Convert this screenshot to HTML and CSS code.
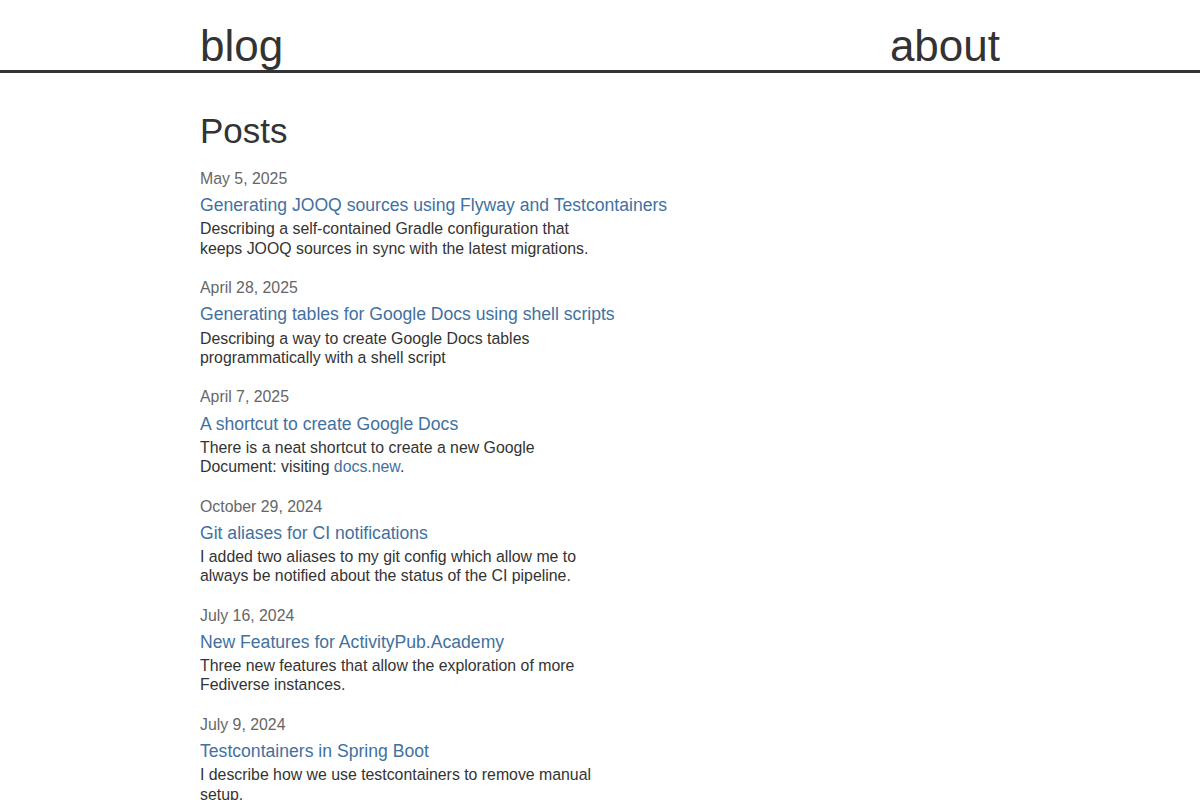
FILE: index.html
```html
<!DOCTYPE html>
<html lang="en">
<head>
<meta charset="utf-8">
<title>blog</title>
<link rel="stylesheet" href="styles.css">
</head>
<body>
<header class="site-header">
  <nav class="nav">
    <a class="nav-link" href="#">blog</a>
    <a class="nav-link" href="#">about</a>
  </nav>
</header>
<main class="content">
  <h1 class="page-title">Posts</h1>
  <ul class="posts">
    <li class="post">
      <div class="post-date">May 5, 2025</div>
      <a class="post-title" href="#">Generating JOOQ sources using Flyway and Testcontainers</a>
      <p class="post-desc">Describing a self-contained Gradle configuration that keeps JOOQ sources in sync with the latest migrations.</p>
    </li>
    <li class="post">
      <div class="post-date">April 28, 2025</div>
      <a class="post-title" href="#">Generating tables for Google Docs using shell scripts</a>
      <p class="post-desc">Describing a way to create Google Docs tables programmatically with a shell script</p>
    </li>
    <li class="post">
      <div class="post-date">April 7, 2025</div>
      <a class="post-title" href="#">A shortcut to create Google Docs</a>
      <p class="post-desc">There is a neat shortcut to create a new Google Document: visiting <a class="inline-link" href="#">docs.new</a>.</p>
    </li>
    <li class="post">
      <div class="post-date">October 29, 2024</div>
      <a class="post-title" href="#">Git aliases for CI notifications</a>
      <p class="post-desc">I added two aliases to my git config which allow me to always be notified about the status of the CI pipeline.</p>
    </li>
    <li class="post">
      <div class="post-date">July 16, 2024</div>
      <a class="post-title" href="#">New Features for ActivityPub.Academy</a>
      <p class="post-desc">Three new features that allow the exploration of more Fediverse instances.</p>
    </li>
    <li class="post">
      <div class="post-date">July 9, 2024</div>
      <a class="post-title" href="#">Testcontainers in Spring Boot</a>
      <p class="post-desc">I describe how we use testcontainers to remove manual setup.</p>
    </li>
  </ul>
</main>
</body>
</html>
```
FILE: styles.css
```css
html, body {
  margin: 0;
  padding: 0;
  background: #ffffff;
}
body {
  font-family: "Liberation Sans", Arial, sans-serif;
  color: #333333;
  font-size: 16px;
}
.site-header {
  border-bottom: 3px solid #333333;
  padding-top: 22px;
}
.nav {
  width: 800px;
  margin: 0 auto;
  display: flex;
  justify-content: space-between;
}
.nav-link {
  font-size: 44px;
  line-height: 48px;
  color: #333333;
  text-decoration: none;
}
.content {
  width: 800px;
  margin: 0 auto;
  padding-top: 37px;
}
.page-title {
  font-size: 35px;
  line-height: 42px;
  font-weight: normal;
  margin: 0 0 17px;
  color: #333333;
}
.posts {
  list-style: none;
  margin: 0;
  padding: 0;
}
.post {
  margin-bottom: 20.5px;
}
.post-date {
  color: #666666;
  font-size: 15.85px;
  line-height: 19.2px;
  margin-bottom: 7px;
}
.post-title {
  display: block;
  color: #4271a0;
  text-decoration: none;
  font-size: 17.6px;
  line-height: 21.1px;
  margin-bottom: 3px;
}
.post-desc {
  margin: 0;
  max-width: 400px;
  font-size: 15.85px;
  line-height: 19.2px;
  color: #333333;
}
.inline-link {
  color: #4271a0;
  text-decoration: none;
}
```
